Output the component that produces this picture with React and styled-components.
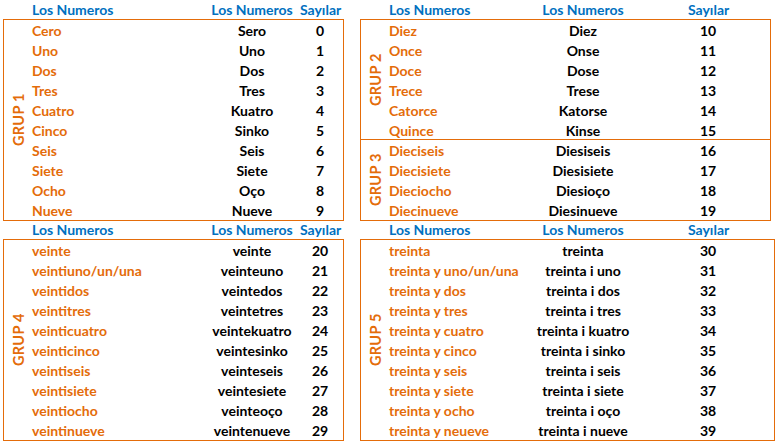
import React from "react";
import styled, { createGlobalStyle } from "styled-components";

const ORANGE = "#e46c0a";
const BLUE = "#0070c0";

const groups = {
  g1: [
    ["Cero", "Sero", 0],
    ["Uno", "Uno", 1],
    ["Dos", "Dos", 2],
    ["Tres", "Tres", 3],
    ["Cuatro", "Kuatro", 4],
    ["Cinco", "Sinko", 5],
    ["Seis", "Seis", 6],
    ["Siete", "Siete", 7],
    ["Ocho", "Oço", 8],
    ["Nueve", "Nueve", 9],
  ],
  g2: [
    ["Diez", "Diez", 10],
    ["Once", "Onse", 11],
    ["Doce", "Dose", 12],
    ["Trece", "Trese", 13],
    ["Catorce", "Katorse", 14],
    ["Quince", "Kinse", 15],
  ],
  g3: [
    ["Dieciseis", "Diesiseis", 16],
    ["Diecisiete", "Diesisiete", 17],
    ["Dieciocho", "Diesioço", 18],
    ["Diecinueve", "Diesinueve", 19],
  ],
  g4: [
    ["veinte", "veinte", 20],
    ["veintiuno/un/una", "veinteuno", 21],
    ["veintidos", "veintedos", 22],
    ["veintitres", "veintetres", 23],
    ["veinticuatro", "veintekuatro", 24],
    ["veinticinco", "veintesinko", 25],
    ["veintiseis", "veinteseis", 26],
    ["veintisiete", "veintesiete", 27],
    ["veintiocho", "veinteoço", 28],
    ["veintinueve", "veintenueve", 29],
  ],
  g5: [
    ["treinta", "treinta", 30],
    ["treinta y uno/un/una", "treinta i uno", 31],
    ["treinta y dos", "treinta i dos", 32],
    ["treinta y tres", "treinta i tres", 33],
    ["treinta y cuatro", "treinta i kuatro", 34],
    ["treinta y cinco", "treinta i sinko", 35],
    ["treinta y seis", "treinta i seis", 36],
    ["treinta y siete", "treinta i siete", 37],
    ["treinta y ocho", "treinta i oço", 38],
    ["treinta y neueve", "treinta i nueve", 39],
  ],
};

// named lines so every row and header share the same columns
const LEFT_COLS = "[label] 28px [es] 172px [tr] 96px 0px [num] 40px 1fr";
const RIGHT_COLS = "[label] 28px [es] 139px [tr] 110px 50px [num] 40px 1fr";

const Group = ({ label, rows, cols, divided }) => (
  <GroupGrid $cols={cols} $rows={rows.length} $divided={divided}>
    <GroupLabel>{label}</GroupLabel>
    {rows.map(([es, tr, n]) => (
      <React.Fragment key={n}>
        <Spanish>{es}</Spanish>
        <Spelled>{tr}</Spelled>
        <Num>{n}</Num>
      </React.Fragment>
    ))}
  </GroupGrid>
);

const Panel = ({ cols, width, headH, children }) => (
  <PanelWrap $width={width}>
    <HeadRow $cols={cols} $h={headH}>
      <HeadCell $col="es">Los Numeros</HeadCell>
      <HeadCell $col="tr" $center>
        Los Numeros
      </HeadCell>
      <HeadCell $col="num" $center>
        Sayılar
      </HeadCell>
    </HeadRow>
    <Box>{children}</Box>
  </PanelWrap>
);

const App = () => (
  <>
    <GlobalStyle />
    <Sheet>
      <Panel cols={LEFT_COLS} width={341} headH={19}>
        <Group label="GRUP 1" rows={groups.g1} cols={LEFT_COLS} />
      </Panel>
      <Panel cols={RIGHT_COLS} width={411} headH={19}>
        <Group label="GRUP 2" rows={groups.g2} cols={RIGHT_COLS} />
        <Group label="GRUP 3" rows={groups.g3} cols={RIGHT_COLS} divided />
      </Panel>
      <Panel cols={LEFT_COLS} width={341} headH={18}>
        <Group label="GRUP 4" rows={groups.g4} cols={LEFT_COLS} />
      </Panel>
      <Panel cols={RIGHT_COLS} width={415} headH={18}>
        <Group label="GRUP 5" rows={groups.g5} cols={RIGHT_COLS} />
      </Panel>
    </Sheet>
  </>
);

const GlobalStyle = createGlobalStyle`
  body {
    margin: 0;
    background: #ffffff;
    font-family: Lato, "Open Sans", "Liberation Sans", sans-serif;
    font-weight: 700;
    font-size: 14px;
  }
`;

const Sheet = styled.div`
  display: grid;
  grid-template-columns: 341px auto;
  column-gap: 16px;
  padding-left: 3px;
  align-items: start;
`;

const PanelWrap = styled.div`
  width: ${(p) => p.$width}px;
`;

const HeadRow = styled.div`
  display: grid;
  grid-template-columns: ${(p) => p.$cols};
  height: ${(p) => p.$h}px;
  padding-left: 1px;
  align-items: center;
`;

const HeadCell = styled.span`
  grid-column-start: ${(p) => p.$col};
  grid-row: 1;
  color: ${BLUE};
  text-align: ${(p) => (p.$center ? "center" : "left")};
  white-space: nowrap;
  line-height: 18px;
`;

const Box = styled.div`
  border: 1px solid ${ORANGE};
`;

const GroupGrid = styled.div`
  display: grid;
  grid-template-columns: ${(p) => p.$cols};
  grid-template-rows: repeat(${(p) => p.$rows}, 20px);
  align-items: center;
  border-top: ${(p) => (p.$divided ? `1px solid ${ORANGE}` : "none")};
  margin-top: ${(p) => (p.$divided ? "-1px" : "0")};
`;

const GroupLabel = styled.div`
  grid-column-start: label;
  grid-row: 1 / -1;
  align-self: stretch;
  display: flex;
  align-items: center;
  justify-content: center;
  writing-mode: vertical-rl;
  transform: rotate(180deg);
  color: ${ORANGE};
  font-size: 14.5px;
  white-space: nowrap;
  letter-spacing: 0.3px;
`;

const Spanish = styled.span`
  grid-column-start: es;
  color: ${ORANGE};
  white-space: nowrap;
`;

const Spelled = styled.span`
  grid-column-start: tr;
  color: #000;
  text-align: center;
  white-space: nowrap;
`;

const Num = styled.span`
  grid-column-start: num;
  color: #000;
  text-align: center;
`;

export default App;
